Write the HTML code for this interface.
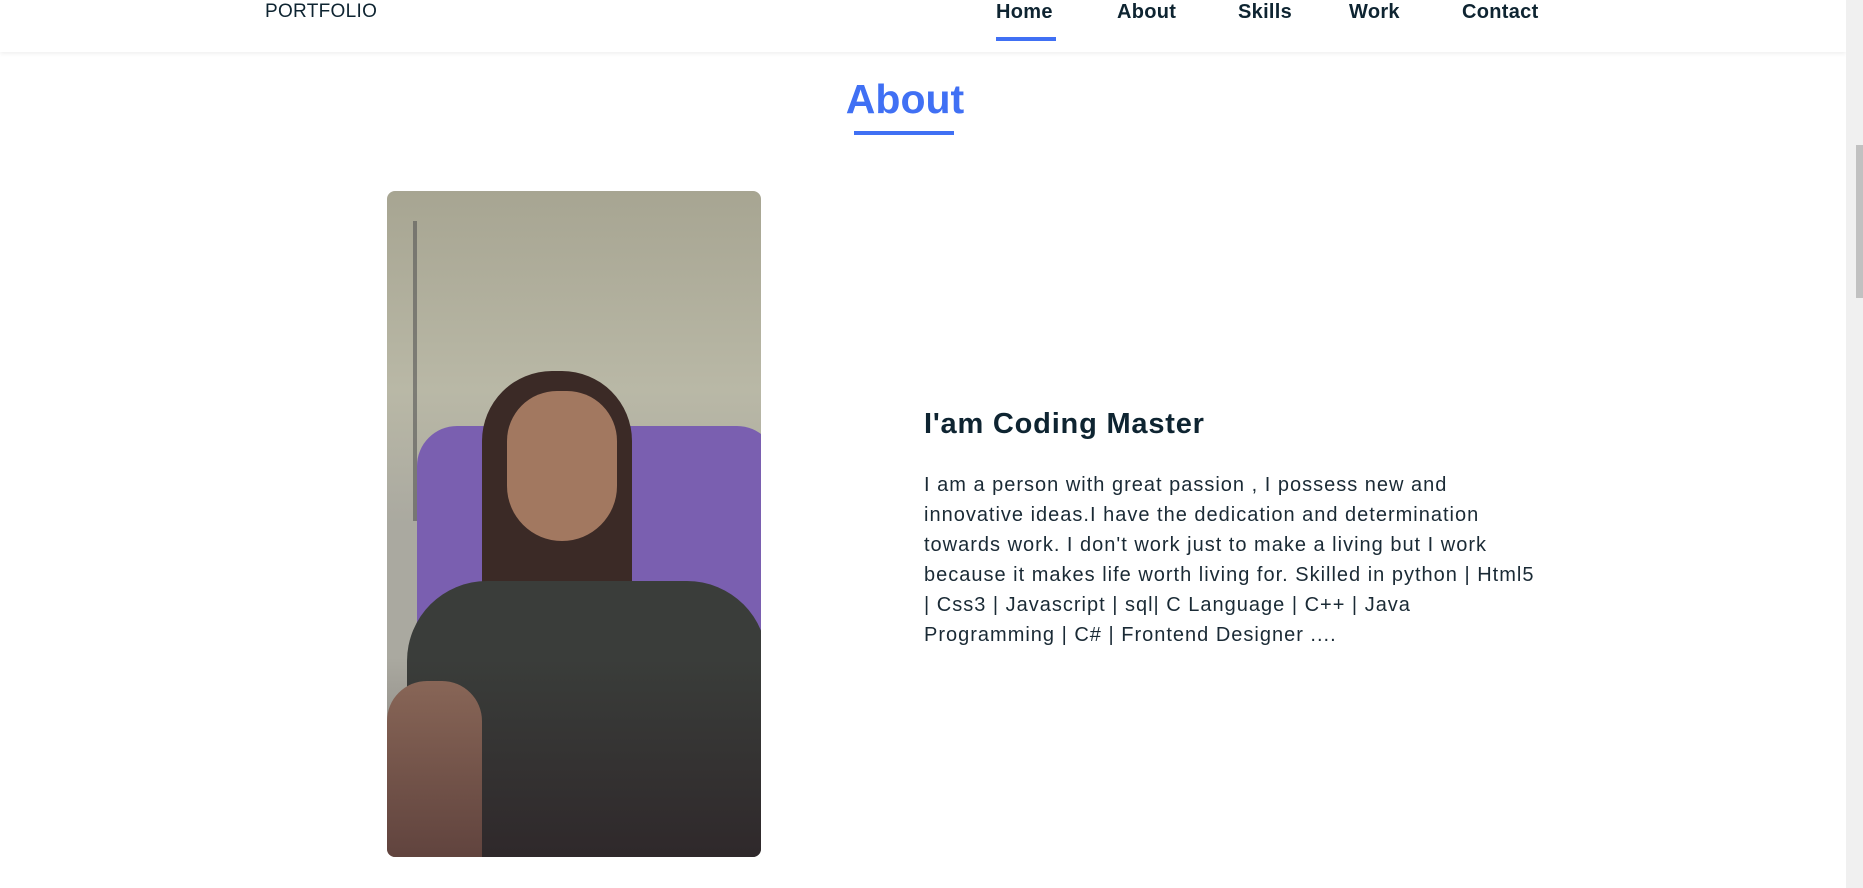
<!DOCTYPE html>
<html><head><style>
*{margin:0;padding:0;box-sizing:border-box}
body{width:1863px;height:888px;overflow:hidden;background:#fff;font-family:"Liberation Sans",sans-serif;color:#0e2431;position:relative}
.hdr{position:absolute;left:0;top:0;width:1846px;height:52px;background:#fff;box-shadow:0 2px 4px rgba(0,0,0,.06)}
.logo{position:absolute;left:265px;top:1px;font-size:19px;line-height:22px;font-weight:500;letter-spacing:0.3px}
.nav a{position:absolute;top:1px;font-size:20px;line-height:22px;font-weight:bold;color:#0e2431;text-decoration:none;letter-spacing:0.3px}
.ul{position:absolute;left:996px;top:37px;width:60px;height:4px;background:#4070f4}
.sb{position:absolute;left:1846px;top:0;width:17px;height:888px;background:#f0f0f0}
.th{position:absolute;left:1856px;top:145px;width:7px;height:153px;background:#c1c1c1}
h2{position:absolute;left:0;width:1810px;text-align:center;top:76px;font-size:41px;color:#4070f4;font-weight:bold}
.hu{position:absolute;left:854px;top:131px;width:100px;height:4px;background:#4070f4}
.img{position:absolute;left:387px;top:191px;width:374px;height:666px;border-radius:8px;overflow:hidden;background:linear-gradient(#a7a592,#b9b8a6 30%,#aaa9a0 50%)}
h3{position:absolute;left:924px;top:408px;font-size:29px;font-weight:bold;letter-spacing:0.8px}
p{position:absolute;left:924px;top:470px;width:800px;font-size:20px;line-height:30px;color:#1a2a35;white-space:nowrap;letter-spacing:1px}
</style></head><body>
<div class="hdr"><div class="logo">PORTFOLIO</div>
<div class="nav"><a style="left:996px">Home</a><a style="left:1117px">About</a><a style="left:1238px">Skills</a><a style="left:1349px">Work</a><a style="left:1462px">Contact</a></div>
<div class="ul"></div></div>
<div class="sb"></div><div class="th"></div>
<h2>About</h2><div class="hu"></div>
<div class="img">
<div style="position:absolute;left:0;top:30px;width:30px;height:300px;border-right:4px solid #555;opacity:.6"></div>
<div style="position:absolute;left:30px;top:235px;width:360px;height:240px;background:#7a5fb0;border-radius:40px 40px 0 0"></div>
<div style="position:absolute;left:95px;top:180px;width:150px;height:290px;background:#3b2a26;border-radius:70px 70px 20px 20px"></div>
<div style="position:absolute;left:120px;top:200px;width:110px;height:150px;background:#a27860;border-radius:50px 50px 55px 55px"></div>
<div style="position:absolute;left:20px;top:390px;width:360px;height:300px;background:#3a3d3a;border-radius:80px 80px 0 0"></div>
<div style="position:absolute;left:0;top:490px;width:95px;height:200px;background:#8d6a5a;border-radius:40px 40px 0 0"></div>
<div style="position:absolute;left:0;top:0;width:100%;height:100%;background:linear-gradient(rgba(0,0,0,0) 70%,rgba(30,10,20,.4))"></div>
</div>
<h3>I'am Coding Master</h3>
<p>I am a person with great passion , I possess new and<br>innovative ideas.I have the dedication and determination<br>towards work. I don't work just to make a living but I work<br>because it makes life worth living for. Skilled in python | Html5<br>| Css3 | Javascript | sql| C Language | C++ | Java<br>Programming | C# | Frontend Designer ....</p>
</body></html>
